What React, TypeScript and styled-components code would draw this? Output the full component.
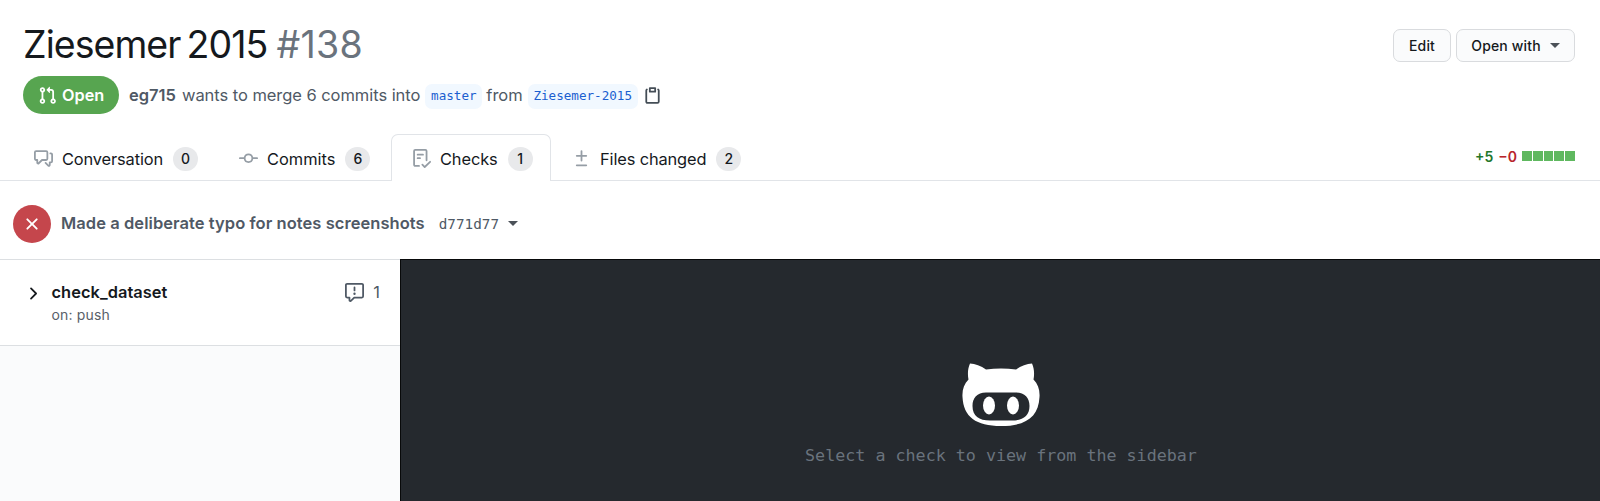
import React from "react";
import styled, { createGlobalStyle } from "styled-components";

const sans = `Inter, "Liberation Sans", sans-serif`;
const mono = `"DejaVu Sans Mono", "Liberation Mono", monospace`;

const GlobalStyle = createGlobalStyle`
  * { box-sizing: border-box; }
  body {
    margin: 0;
    background: #fff;
    color: #15191d;
    font-family: ${sans};
    overflow: hidden;
  }
`;

const icons = {
  pullRequest:
    "M7.177 3.073L9.573.677A.25.25 0 0110 .854v4.792a.25.25 0 01-.427.177L7.177 3.427a.25.25 0 010-.354zM3.75 2.5a.75.75 0 100 1.5.75.75 0 000-1.5zm-2.25.75a2.25 2.25 0 113 2.122v5.256a2.251 2.251 0 11-1.5 0V5.372A2.25 2.25 0 011.5 3.25zM11 2.5h-1V4h1a1 1 0 011 1v5.628a2.251 2.251 0 101.5 0V5A2.5 2.5 0 0011 2.5zm1 10.25a.75.75 0 111.5 0 .75.75 0 01-1.5 0zM3.75 12a.75.75 0 100 1.5.75.75 0 000-1.5z",
  discussion:
    "M1.5 2.75a.25.25 0 01.25-.25h8.5a.25.25 0 01.25.25v5.5a.25.25 0 01-.25.25h-3.5a.75.75 0 00-.53.22L3.5 11.44V9.25a.75.75 0 00-.75-.75h-1a.25.25 0 01-.25-.25v-5.5zM1.75 1A1.75 1.75 0 000 2.75v5.5C0 9.216.784 10 1.75 10H2v1.543a1.457 1.457 0 002.487 1.03L7.061 10h3.189A1.75 1.75 0 0012 8.25v-5.5A1.75 1.75 0 0010.25 1h-8.5zM14.5 4.75a.25.25 0 00-.25-.25h-.5a.75.75 0 110-1.5h.5c.966 0 1.75.784 1.75 1.75v5.5A1.75 1.75 0 0114.25 12H14v1.543a1.457 1.457 0 01-2.487 1.03L9.22 12.28a.75.75 0 111.06-1.06l2.22 2.22v-2.19a.75.75 0 01.75-.75h1a.25.25 0 00.25-.25v-5.5z",
  commit:
    "M10.5 7.75a2.5 2.5 0 11-5 0 2.5 2.5 0 015 0zm1.43.75a4.002 4.002 0 01-7.86 0H.75a.75.75 0 110-1.5h3.32a4.001 4.001 0 017.86 0h3.32a.75.75 0 110 1.5h-3.32z",
  checklist:
    "M2.5 1.75a.25.25 0 01.25-.25h8.5a.25.25 0 01.25.25v7.736a.75.75 0 101.5 0V1.75A1.75 1.75 0 0011.25 0h-8.5A1.75 1.75 0 001 1.75v11.5c0 .966.784 1.75 1.75 1.75h3.17a.75.75 0 000-1.5H2.75a.25.25 0 01-.25-.25V1.75zM4.75 4a.75.75 0 000 1.5h4.5a.75.75 0 000-1.5h-4.5zM4 7.75A.75.75 0 014.75 7h2a.75.75 0 010 1.5h-2A.75.75 0 014 7.75zm11.774 3.537a.75.75 0 00-1.048-1.074L10.7 14.145 9.281 12.72a.75.75 0 00-1.062 1.058l1.943 1.95a.75.75 0 001.055.008l4.557-4.45z",
  diff: "M8.75 1.75a.75.75 0 00-1.5 0V5H4a.75.75 0 000 1.5h3.25v3.25a.75.75 0 001.5 0V6.5H12A.75.75 0 0012 5H8.75V1.75zM4 13a.75.75 0 000 1.5h8a.75.75 0 100-1.5H4z",
  clippy:
    "M5.75 1a.75.75 0 00-.75.75v3c0 .414.336.75.75.75h4.5a.75.75 0 00.75-.75v-3a.75.75 0 00-.75-.75h-4.5zm.75 3V2.5h3V4h-3zm-2.874-.467a.75.75 0 00-.752-1.298A1.75 1.75 0 002 3.75v9.5c0 .966.784 1.75 1.75 1.75h8.5A1.75 1.75 0 0014 13.25v-9.5a1.75 1.75 0 00-.874-1.515.75.75 0 10-.752 1.298.25.25 0 01.126.217v9.5a.25.25 0 01-.25.25h-8.5a.25.25 0 01-.25-.25v-9.5a.25.25 0 01.126-.217z",
  cross:
    "M3.72 3.72a.75.75 0 011.06 0L8 6.94l3.22-3.22a.75.75 0 111.06 1.06L9.06 8l3.22 3.22a.75.75 0 11-1.06 1.06L8 9.06l-3.22 3.22a.75.75 0 01-1.06-1.06L6.94 8 3.72 4.78a.75.75 0 010-1.06z",
  chevron:
    "M6.22 3.22a.75.75 0 011.06 0l4.25 4.25a.75.75 0 010 1.06l-4.25 4.25a.75.75 0 01-1.06-1.06L9.94 8 6.22 4.28a.75.75 0 010-1.06z",
  report:
    "M1.75 1.5a.25.25 0 00-.25.25v9.5c0 .138.112.25.25.25h2a.75.75 0 01.75.75v2.19l2.72-2.72a.75.75 0 01.53-.22h6.5a.25.25 0 00.25-.25v-9.5a.25.25 0 00-.25-.25H1.75zM0 1.75C0 .784.784 0 1.75 0h12.5C15.216 0 16 .784 16 1.75v9.5A1.75 1.75 0 0114.25 13H8.06l-2.573 2.573A1.457 1.457 0 013 14.543V13H1.75A1.75 1.75 0 010 11.25v-9.5zM9 9a1 1 0 11-2 0 1 1 0 012 0zm-.25-5.25a.75.75 0 00-1.5 0v2.5a.75.75 0 001.5 0v-2.5z",
};

const Svg = styled.svg`
  display: block;
  flex: none;
  fill: currentColor;
`;

const Icon = ({ name, size = 19 }: { name: keyof typeof icons; size?: number }) => (
  <Svg width={size} height={size} viewBox="0 0 16 16">
    <path fillRule="evenodd" d={icons[name]} />
  </Svg>
);

const Page = styled.div`
  display: flex;
  flex-direction: column;
  width: 1600px;
  height: 501px;
`;

const TitleBar = styled.header`
  display: flex;
  justify-content: space-between;
  height: 76px;
  padding: 0 25px 0 23px;
`;

const Title = styled.h1`
  margin: 22px 0 0;
  font-size: 37.5px;
  line-height: 46px;
  font-weight: 400;
  letter-spacing: -0.95px;
  word-spacing: -3.5px;
  white-space: nowrap;
`;

const Number = styled.span`
  margin-left: 3px;
  color: #6a737d;
  letter-spacing: 0.3px;
`;

const Actions = styled.div`
  display: flex;
  gap: 5px;
  margin-top: 29px;
`;

const Button = styled.button<{ $width: number }>`
  display: flex;
  align-items: center;
  justify-content: center;
  gap: 9px;
  width: ${(p) => p.$width}px;
  height: 33px;
  padding: 0;
  border: 1px solid #d9dbde;
  border-radius: 7px;
  background: #fafbfc;
  color: #15191d;
  font: 500 14px ${sans};
  letter-spacing: 0.15px;
  white-space: nowrap;
`;

const Caret = styled.span`
  border: 0 solid transparent;
  border-width: 5px 5px 0;
  border-top-color: currentColor;
  color: #4b5158;
`;

const MetaRow = styled.div`
  display: flex;
  align-items: center;
  height: 38px;
  padding-left: 23px;
  color: #4f5965;
  font-size: 16.5px;
  white-space: nowrap;
`;

const State = styled.span`
  display: flex;
  align-items: center;
  gap: 5px;
  width: 96px;
  height: 38px;
  margin-right: 10px;
  padding-left: 15px;
  border-radius: 19px;
  background: #57a550;
  color: #fff;
  font-weight: 600;
  font-size: 16.3px;
`;

const Author = styled.b`
  font-weight: 600;
  margin-right: 6px;
`;

const Summary = styled.span`
  letter-spacing: -0.05px;
`;

const Branch = styled.code<{ $width: number }>`
  width: ${(p) => p.$width}px;
  height: 25px;
  margin: 3px 4px 0 5px;
  border-radius: 7px;
  background: #f1f8ff;
  color: #1b5fd0;
  font: 12.6px/24px ${mono};
  text-align: center;
`;

const CopyButton = styled.span`
  margin-left: 1px;
  color: #444d56;
`;

const Tabs = styled.nav`
  display: flex;
  height: 67px;
  padding: 20px 25px 0 22px;
  box-shadow: inset 0 -1px #e1e4e8;
`;

const Tab = styled.a<{ $width: number; $indent: number; $active?: boolean }>`
  display: flex;
  align-items: center;
  width: ${(p) => p.$width}px;
  height: 47px;
  padding: 2px 0 0 ${(p) => p.$indent}px;
  border: 1px solid ${(p) => (p.$active ? "#e1e4e8" : "transparent")};
  border-bottom: 0;
  border-radius: 7px 7px 0 0;
  background: ${(p) => (p.$active ? "#fff" : "transparent")};
  color: #15191d;
  font-size: 16.4px;
  white-space: nowrap;
`;

const TabIcon = styled.span`
  width: 28px;
  margin-top: -2px;
  color: #959da5;
`;

const TabLabel = styled.span<{ $tracking: number }>`
  margin-top: -1px;
  letter-spacing: ${(p) => p.$tracking}px;
`;

const Counter = styled.span`
  min-width: 25px;
  height: 24px;
  margin-left: 10px;
  border-radius: 12px;
  background: #e8e9eb;
  font-size: 14px;
  font-weight: 500;
  line-height: 24px;
  text-align: center;
`;

const DiffStat = styled.div`
  display: flex;
  align-items: center;
  gap: 5px;
  height: 44px;
  margin-left: auto;
  font-size: 14px;
  font-weight: 600;
`;

const Added = styled.span`
  color: #22772b;
`;

const Removed = styled.span`
  color: #b8242b;
`;

const Blocks = styled.span`
  display: grid;
  grid-template-columns: repeat(5, 1fr);
  gap: 1px;
  width: 53px;
  height: 10px;
`;

const Block = styled.i`
  background: #5fb85f;
`;

const CommitBar = styled.section`
  display: flex;
  align-items: center;
  height: 79px;
  padding: 7px 0 0 13px;
  border-bottom: 1px solid #dcdfe2;
  color: #4f5965;
  white-space: nowrap;
`;

const FailBadge = styled.span`
  display: grid;
  place-items: center;
  width: 38px;
  height: 38px;
  margin-right: 10px;
  border-radius: 50%;
  background: #c5464c;
  color: #fff;
`;

const CommitTitle = styled.span`
  margin: -1px 14px 0 0;
  font-size: 16.5px;
  font-weight: 600;
  letter-spacing: 0.06px;
`;

const Sha = styled.span`
  margin-right: 9px;
  font: 14.3px ${mono};
`;

const Body = styled.div`
  display: flex;
  flex: 1;
  margin-top: -1px;
`;

const Sidebar = styled.aside`
  width: 400px;
  background: #fafbfc;
`;

const Workflow = styled.div`
  display: flex;
  height: 87px;
  padding: 22px 20px 0 23px;
  border-top: 1px solid #dcdfe2;
  border-bottom: 1px solid #dcdfe2;
  background: #fff;
`;

const ChevronBox = styled.span`
  margin-top: 2px;
`;

const WorkflowText = styled.div`
  flex: 1;
  margin-left: 9.5px;
`;

const WorkflowName = styled.div`
  font-size: 16.4px;
  font-weight: 600;
  line-height: 20px;
  letter-spacing: 0.05px;
`;

const Trigger = styled.div`
  margin-top: 3px;
  color: #586069;
  font-size: 14px;
  line-height: 20px;
  letter-spacing: 0.15px;
`;

const Annotations = styled.div`
  display: flex;
  gap: 9px;
  height: 20px;
  align-items: center;
  color: #4f5965;
  font-size: 16.4px;
`;

const Console = styled.main`
  display: flex;
  flex: 1;
  flex-direction: column;
  align-items: center;
  padding: 103px 0 0 1px;
  border-top: 1px solid #08090a;
  border-left: 1px solid #08090a;
  background: #25292e;
`;

const Hint = styled.p`
  margin: 17px 0 0;
  color: #6a737d;
  font: 16.7px/22px ${mono};
  white-space: nowrap;
`;

const CatHead = () => (
  <Svg width="78" height="64" viewBox="0 0 78 64">
    <path
      fill="#fff"
      fillRule="evenodd"
      d="M8 0.500C13 0.500 19 3 24 6.500Q39 4.500 54 6.500C59 3 65 0.500 70 0.500C72.300 5.500 72.500 11.500 71.500 16.500C76 21 78 27 77.500 34C76.500 54 64 63 39 63S1.500 54 .5 34C0 27 2 21 6.500 16.500C5.500 11.500 5.700 5.500 8 0.500ZM24 29.500C15 29.500 10.500 35 10.500 43C10.500 53 17 57.500 28 57.500H50C61 57.500 67.500 53 67.500 43C67.500 35 63 29.500 54 29.500Z"
    />
    <ellipse cx="27" cy="42.500" rx="6" ry="9" fill="#fff" />
    <ellipse cx="51" cy="42.500" rx="6" ry="9" fill="#fff" />
  </Svg>
);

type TabData = {
  icon: keyof typeof icons;
  label: string;
  count: number;
  width: number;
  indent: number;
  tracking: number;
  active?: boolean;
};

const tabs: TabData[] = [
  { icon: "discussion", label: "Conversation", count: 0, width: 205, indent: 11, tracking: -0.13 },
  { icon: "commit", label: "Commits", count: 6, width: 164, indent: 11, tracking: 0.02 },
  { icon: "checklist", label: "Checks", count: 1, width: 160, indent: 20, tracking: -0.1, active: true },
  { icon: "diff", label: "Files changed", count: 2, width: 200, indent: 20, tracking: -0.13 },
];

export default function App() {
  return (
    <Page>
      <GlobalStyle />
      <TitleBar>
        <Title>
          Ziesemer 2015 <Number>#138</Number>
        </Title>
        <Actions>
          <Button $width={58}>Edit</Button>
          <Button $width={119}>
            Open with <Caret />
          </Button>
        </Actions>
      </TitleBar>
      <MetaRow>
        <State>
          <Icon name="pullRequest" />
          Open
        </State>
        <Author>eg715</Author>
        <Summary>wants to merge 6 commits into</Summary>
        <Branch $width={57}>master</Branch>
        <span>from</span>
        <Branch $width={110}>Ziesemer-2015</Branch>
        <CopyButton>
          <Icon name="clippy" />
        </CopyButton>
      </MetaRow>
      <Tabs>
        {tabs.map((t) => (
          <Tab key={t.label} $width={t.width} $indent={t.indent} $active={t.active}>
            <TabIcon>
              <Icon name={t.icon} />
            </TabIcon>
            <TabLabel $tracking={t.tracking}>{t.label}</TabLabel>
            <Counter>{t.count}</Counter>
          </Tab>
        ))}
        <DiffStat>
          <Added>+5</Added>
          <Removed>−0</Removed>
          <Blocks>
            {[0, 1, 2, 3, 4].map((i) => (
              <Block key={i} />
            ))}
          </Blocks>
        </DiffStat>
      </Tabs>
      <CommitBar>
        <FailBadge>
          <Icon name="cross" size={20} />
        </FailBadge>
        <CommitTitle>Made a deliberate typo for notes screenshots</CommitTitle>
        <Sha>d771d77</Sha>
        <Caret />
      </CommitBar>
      <Body>
        <Sidebar>
          <Workflow>
            <ChevronBox>
              <Icon name="chevron" />
            </ChevronBox>
            <WorkflowText>
              <WorkflowName>check_dataset</WorkflowName>
              <Trigger>on: push</Trigger>
            </WorkflowText>
            <Annotations>
              <Icon name="report" />1
            </Annotations>
          </Workflow>
        </Sidebar>
        <Console>
          <CatHead />
          <Hint>Select a check to view from the sidebar</Hint>
        </Console>
      </Body>
    </Page>
  );
}
